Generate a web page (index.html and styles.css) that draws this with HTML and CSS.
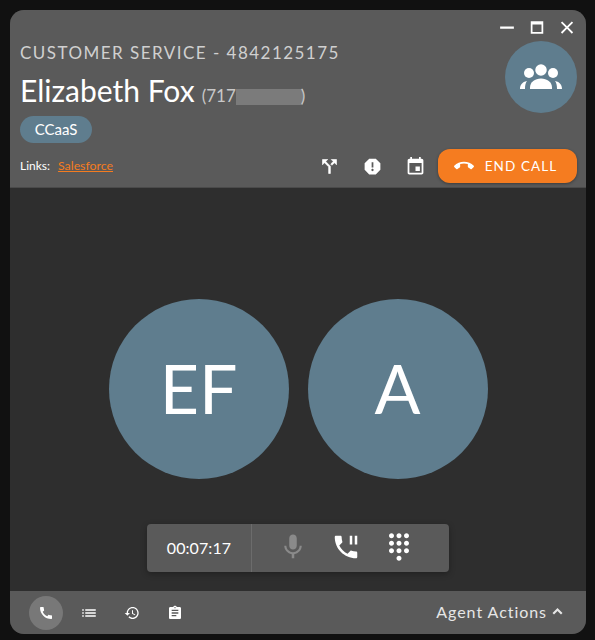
FILE: index.html
```html
<!DOCTYPE html>
<html lang="en">
<head>
  <meta charset="UTF-8" />
  <meta name="viewport" content="width=device-width, initial-scale=1.0" />
  <title>Call</title>
  <link rel="stylesheet" href="styles.css">
</head>
<body>
  <div class="window">
    <header class="header">
      <div class="top">
        <div class="info">
          <div class="queue">CUSTOMER SERVICE - 4842125175</div>
          <div class="caller">
            <span class="name">Elizabeth Fox</span>
            <span class="phone">(717<span class="redacted"></span>)</span>
          </div>
          <span class="chip">CCaaS</span>
        </div>
        <div class="side">
          <div class="controls">
            <svg class="ctl" viewBox="0 0 24 24"><path d="M1 10.500h22v3.400H1z"/></svg>
            <svg class="ctl" viewBox="0 0 24 24"><path d="M2 2h20v20H2V2zm2.800 5v12.200h14.400V7H4.800z"/></svg>
            <svg class="ctl" viewBox="0 0 24 24"><path d="M21.800 4.300L19.700 2.200 12 9.900 4.300 2.200 2.200 4.300 9.900 12l-7.700 7.700 2.100 2.100 7.700-7.700 7.700 7.700 2.100-2.100-7.700-7.700z"/></svg>
          </div>
          <div class="team">
            <svg viewBox="0 0 42 30">
              <circle cx="9" cy="11" r="5"/>
              <circle cx="33" cy="11" r="5"/>
              <circle class="team-head" cx="21" cy="8" r="6.500"/>
              <path d="M10 27v-1.500c0-5.500 5-9 11-9s11 3.500 11 9V27z"/>
              <path d="M0 27c0-4 2-7 7-8-1.500 2-2 4.500-2 8z"/>
              <path d="M42 27c0-4-2-7-7-8 1.500 2 2 4.500 2 8z"/>
            </svg>
          </div>
        </div>
      </div>
      <div class="links-row">
        <div class="links">
          <span class="links-label">Links:</span>
          <a class="link" href="#">Salesforce</a>
        </div>
        <div class="actions">
          <svg class="action split" viewBox="0 0 24 24"><path d="M14 4l2.290 2.290-2.880 2.880 1.420 1.420 2.880-2.880L20 10V4zm-4 0H4v6l2.290-2.290 4.710 4.700V20h2v-8.410l-5.290-5.300z"/></svg>
          <svg class="action" viewBox="0 0 24 24"><path d="M15.730 3H8.270L3 8.270v7.460L8.270 21h7.460L21 15.730V8.270L15.730 3zM12 17.300c-.720 0-1.300-.580-1.300-1.300 0-.720.580-1.300 1.300-1.300.720 0 1.300.580 1.300 1.300 0 .720-.580 1.300-1.300 1.300zm1-4.300h-2V7h2v6z"/></svg>
          <svg class="action" viewBox="0 0 24 24"><path d="M17 12h-5v5h5v-5zM16 1v2H8V1H6v2H5c-1.110 0-1.990.900-1.990 2L3 19c0 1.100.890 2 2 2h14c1.100 0 2-.900 2-2V5c0-1.100-.900-2-2-2h-1V1h-2zm3 18H5V8h14v11z"/></svg>
          <button class="end-call">
            <svg viewBox="0 0 24 24"><path d="M12 9c-1.600 0-3.150.250-4.600.720v3.100c0 .390-.230.740-.560.900-.980.490-1.870 1.120-2.660 1.850-.180.180-.430.280-.700.280-.280 0-.530-.110-.710-.290L.290 13.080c-.180-.170-.290-.420-.290-.700 0-.280.110-.530.290-.710C3.340 8.780 7.460 7 12 7s8.660 1.780 11.710 4.670c.180.180.290.430.290.710 0 .280-.110.530-.290.710l-2.480 2.480c-.180.180-.430.290-.710.290-.270 0-.520-.110-.700-.280-.790-.740-1.690-1.360-2.670-1.850-.330-.160-.560-.500-.560-.900v-3.100C15.150 9.250 13.600 9 12 9z"/></svg>
            END CALL
          </button>
        </div>
      </div>
    </header>

    <main class="stage">
      <div class="people">
        <div class="person">EF</div>
        <div class="person">A</div>
      </div>
      <div class="toolbar">
        <div class="timer">00:07:17</div>
        <div class="tools">
          <svg class="tool muted" viewBox="0 0 24 24"><path d="M12 14c1.660 0 3-1.340 3-3V5c0-1.660-1.340-3-3-3S9 3.340 9 5v6c0 1.660 1.340 3 3 3zm5.300-3c0 3-2.540 5.100-5.300 5.100S6.700 14 6.700 11H5c0 3.410 2.720 6.230 6 6.720V21h2v-3.280c3.280-.480 6-3.300 6-6.720h-1.700z"/></svg>
          <svg class="tool" viewBox="0 0 24 24"><path d="M17 3h-2v7h2V3zm3 12.500c-1.250 0-2.450-.200-3.570-.570-.350-.110-.740-.030-1.020.240l-2.200 2.200c-2.830-1.440-5.150-3.750-6.590-6.590l2.200-2.210c.280-.260.360-.650.250-1C8.700 6.450 8.500 5.250 8.500 4c0-.550-.450-1-1-1H4c-.550 0-1 .450-1 1 0 9.390 7.610 17 17 17 .550 0 1-.450 1-1v-3.500c0-.550-.450-1-1-1zM19 3v7h2V3h-2z"/></svg>
          <svg class="tool" viewBox="0 0 24 24"><path d="M12 19c-1.100 0-2 .900-2 2s.900 2 2 2 2-.900 2-2-.900-2-2-2zM6 1c-1.100 0-2 .900-2 2s.900 2 2 2 2-.900 2-2-.900-2-2-2zm0 6c-1.100 0-2 .900-2 2s.900 2 2 2 2-.900 2-2-.900-2-2-2zm0 6c-1.100 0-2 .900-2 2s.900 2 2 2 2-.900 2-2-.900-2-2-2zm12-8c1.100 0 2-.900 2-2s-.900-2-2-2-2 .900-2 2 .900 2 2 2zm-6 8c-1.100 0-2 .900-2 2s.900 2 2 2 2-.900 2-2-.900-2-2-2zm6 0c-1.100 0-2 .900-2 2s.900 2 2 2 2-.900 2-2-.900-2-2-2zm0-6c-1.100 0-2 .900-2 2s.900 2 2 2 2-.900 2-2-.900-2-2-2zm-6 0c-1.100 0-2 .900-2 2s.900 2 2 2 2-.900 2-2-.900-2-2-2zm0-6c-1.100 0-2 .900-2 2s.900 2 2 2 2-.900 2-2-.900-2-2-2z"/></svg>
        </div>
      </div>
    </main>

    <footer class="footer">
      <div class="tabs">
        <div class="tab active">
          <svg viewBox="0 0 24 24"><path d="M20.010 15.380c-1.230 0-2.420-.200-3.530-.560-.350-.120-.740-.030-1.010.240l-1.570 1.970c-2.830-1.350-5.480-3.900-6.890-6.830l1.950-1.660c.270-.280.350-.670.240-1.020-.370-1.110-.560-2.300-.560-3.530 0-.540-.450-.990-.990-.990H4.190C3.650 3 3 3.240 3 3.990 3 13.280 10.730 21 20.010 21c.710 0 .990-.630.990-1.180v-3.450c0-.540-.450-.990-.990-.990z"/></svg>
        </div>
        <div class="tab">
          <svg class="list-icon" viewBox="0 0 24 24"><path d="M3 13h2v-2H3v2zm0 4h2v-2H3v2zm0-8h2V7H3v2zm4 4h14v-2H7v2zm0 4h14v-2H7v2zM7 7v2h14V7H7z"/></svg>
        </div>
        <div class="tab">
          <svg viewBox="0 0 24 24"><path d="M13 3c-4.970 0-9 4.030-9 9H1l3.890 3.890.070.140L9 12H6c0-3.870 3.130-7 7-7s7 3.130 7 7-3.130 7-7 7c-1.930 0-3.680-.790-4.940-2.060l-1.420 1.420C8.270 19.990 10.510 21 13 21c4.970 0 9-4.030 9-9s-4.030-9-9-9zm-1 5v5l4.280 2.540.720-1.210-3.500-2.080V8H12z"/></svg>
        </div>
        <div class="tab">
          <svg viewBox="0 0 24 24"><path d="M19 3h-4.180C14.400 1.840 13.300 1 12 1c-1.300 0-2.400.840-2.820 2H5c-1.100 0-2 .900-2 2v14c0 1.100.900 2 2 2h14c1.100 0 2-.900 2-2V5c0-1.100-.900-2-2-2zm-7 0c.550 0 1 .450 1 1s-.450 1-1 1-1-.450-1-1 .450-1 1-1zm2 14H7v-2h7v2zm3-4H7v-2h10v2zm0-4H7V7h10v2z"/></svg>
        </div>
      </div>
      <div class="agent-actions">
        Agent Actions
        <svg viewBox="0 0 24 24"><path d="M12 6.500l-8 8 2.400 2.400 5.600-5.600 5.600 5.600 2.400-2.400z"/></svg>
      </div>
    </footer>
  </div>
</body>
</html>
```

FILE: styles.css
```css
* {
  box-sizing: border-box;
}
body {
  margin: 0;
  height: 640px;
  padding: 10px 9px 6px 10px;
  background: #111;
  font-family: "Lato", sans-serif;
  color: #fff;
  overflow: hidden;
}
svg {
  display: block;
  fill: currentColor;
}
.window {
  height: 624px;
  border-radius: 14px;
  overflow: hidden;
  background: #2e2e2e;
  display: flex;
  flex-direction: column;
}

/* header */
.header {
  height: 178px;
  background: #5a5a5a;
  padding: 0 9px 0 10px;
  border-bottom: 1px solid #4a4a4a;
}
.top {
  display: flex;
  justify-content: space-between;
  height: 139px;
}
.info {
  padding-top: 33px;
}
.queue {
  font-size: 17px;
  line-height: 20px;
  letter-spacing: 1.47px;
  color: #d0d0d0;
}
.caller {
  margin-top: 9px;
  height: 36px;
  line-height: 36px;
  white-space: nowrap;
}
.name {
  font-size: 30px;
}
.phone {
  font-size: 17px;
  color: #c8c8c8;
  margin-left: 3px;
}
.redacted {
  display: inline-block;
  width: 67px;
  height: 16px;
  margin: 0 -2px 0 0;
  vertical-align: -3px;
  background: #7b7b7b;
}
.chip {
  display: inline-block;
  margin-top: 8px;
  width: 72px;
  height: 27px;
  line-height: 26px;
  text-align: center;
  font-size: 15px;
  border-radius: 14px;
  background: #5f7d8e;
}
.side {
  display: flex;
  flex-direction: column;
  align-items: flex-end;
}
.controls {
  display: flex;
  gap: 14px;
  padding-top: 10px;
  margin-right: 2px;
}
.ctl {
  width: 16px;
  height: 15px;
}
.team {
  width: 72px;
  height: 72px;
  margin-top: 6px;
  border-radius: 50%;
  background: #5f7d8e;
  display: flex;
  align-items: center;
  justify-content: center;
}
.team svg {
  width: 42px;
  height: 30px;
}
.team-head {
  stroke: #5f7d8e;
  stroke-width: 1.500;
}
.links-row {
  display: flex;
  justify-content: space-between;
  align-items: center;
  height: 34px;
}
.links {
  display: flex;
  align-items: baseline;
  gap: 8px;
  font-size: 12px;
  margin-top: -1px;
}
.link {
  color: #f57c20;
  font-size: 12.300px;
}
.actions {
  display: flex;
  align-items: center;
}
.action {
  width: 21px;
  height: 21px;
  margin-right: 22px;
}
.action:nth-child(3) {
  margin-right: 12px;
}
.split {
  stroke: currentColor;
  stroke-width: 0.700;
}
.end-call {
  width: 139px;
  height: 34px;
  border: 0;
  padding: 0 4px 0 0;
  border-radius: 12px;
  background: #f57c20;
  color: #fff;
  font-family: inherit;
  font-size: 13.500px;
  letter-spacing: 1.100px;
  display: flex;
  align-items: center;
  justify-content: center;
  gap: 11px;
  box-shadow: 0 1px 3px rgba(0,0,0,0.35);
}
.end-call svg {
  width: 20px;
  height: 20px;
}

/* call stage */
.stage {
  flex: 1;
  display: flex;
  flex-direction: column;
  align-items: center;
  padding-top: 111px;
}
.people {
  display: flex;
  gap: 19px;
}
.person {
  width: 180px;
  height: 180px;
  padding-bottom: 4px;
  border-radius: 50%;
  background: #5f7d8e;
  display: flex;
  align-items: center;
  justify-content: center;
  font-size: 68px;
}
.toolbar {
  margin-top: 45px;
  width: 302px;
  height: 48px;
  display: flex;
  background: #5a5a5a;
  border-radius: 4px;
  box-shadow: 0 2px 6px rgba(0,0,0,0.3);
}
.timer {
  width: 105px;
  line-height: 47px;
  text-align: center;
  font-size: 16px;
  letter-spacing: 0.1px;
  border-right: 1px solid #6c6c6c;
}
.tools {
  display: flex;
  gap: 23px;
  padding: 8px 0 0 26px;
}
.tool {
  width: 30px;
  height: 30px;
}
.muted {
  color: #8a8a8a;
}

/* footer */
.footer {
  height: 43px;
  background: #5a5a5a;
  display: flex;
  justify-content: space-between;
  align-items: center;
  padding: 0 27px 0 19px;
}
.tabs {
  display: flex;
  gap: 9px;
}
.tab {
  width: 34px;
  height: 34px;
  border-radius: 50%;
  display: flex;
  align-items: center;
  justify-content: center;
}
.tab svg {
  width: 16px;
  height: 16px;
}
.tab .list-icon {
  width: 18px;
  height: 18px;
}
.tab.active {
  background: #787878;
}
.agent-actions {
  display: flex;
  align-items: center;
  gap: 3px;
  font-size: 16px;
  letter-spacing: 0.95px;
  color: #e6e6e6;
  margin-top: -2px;
  margin-right: -6px;
}
.agent-actions svg {
  width: 15px;
  height: 15px;
}
```
